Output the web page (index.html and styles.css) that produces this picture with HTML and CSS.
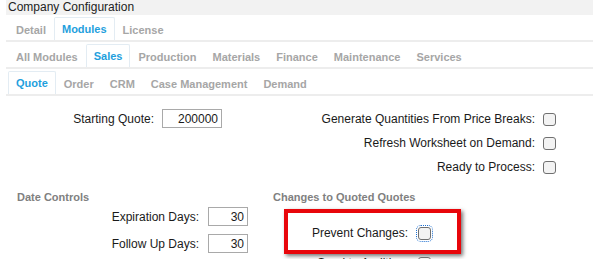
FILE: index.html
```html
<!DOCTYPE html>
<html lang="en">
<head>
    <meta charset="UTF-8">
    <title>Company Configuration</title>
    <link rel="stylesheet" href="styles.css">
</head>
<body>
    <div class="config">
        <div class="title">Company Configuration</div>

        <ul class="tabs">
            <li>Detail</li>
            <li class="active">Modules</li>
            <li>License</li>
        </ul>
        <ul class="tabs">
            <li>All Modules</li>
            <li class="active">Sales</li>
            <li>Production</li>
            <li>Materials</li>
            <li>Finance</li>
            <li>Maintenance</li>
            <li>Services</li>
        </ul>
        <ul class="tabs">
            <li class="active">Quote</li>
            <li>Order</li>
            <li>CRM</li>
            <li>Case Management</li>
            <li>Demand</li>
        </ul>

        <div class="section first">
            <div class="col left">
                <div class="field quote-field">
                    <label>Starting Quote:</label>
                    <input type="text" class="num wide" value="200000">
                </div>
            </div>
            <div class="col right checks">
                <div class="check-row">
                    <label>Generate Quantities From Price Breaks:</label>
                    <input type="checkbox">
                </div>
                <div class="check-row">
                    <label>Refresh Worksheet on Demand:</label>
                    <input type="checkbox">
                </div>
                <div class="check-row">
                    <label>Ready to Process:</label>
                    <input type="checkbox">
                </div>
            </div>
        </div>

        <div class="section">
            <div class="col left">
                <h3 class="date-head">Date Controls</h3>
                <div class="field date-field">
                    <label>Expiration Days:</label>
                    <input type="text" class="num short" value="30">
                </div>
                <div class="field date-field">
                    <label>Follow Up Days:</label>
                    <input type="text" class="num short" value="30">
                </div>
            </div>
            <div class="col right">
                <h3 class="changes-head">Changes to Quoted Quotes</h3>
                <div class="highlight">
                    <div class="field change-field">
                        <label>Prevent Changes:</label>
                        <input type="checkbox" class="focused">
                    </div>
                </div>
                <div class="field change-field after">
                    <label>Send to Auditing:</label>
                    <input type="checkbox">
                </div>
            </div>
        </div>
    </div>
</body>
</html>
```

FILE: styles.css
```css
body {
    margin: 0;
    background-color: #fff;
    font-family: 'Liberation Sans', Arial, sans-serif;
    font-size: 12px;
    color: #1a1a1a;
    overflow: hidden;
}
.config {
    margin-left: 6px;
}
.title {
    height: 15px;
    line-height: 14px;
    padding-left: 2px;
    background-color: #f2f2f2;
    color: #222;
}

/* tab strips */
.tabs {
    display: flex;
    list-style: none;
    margin: 0;
    padding: 2px 0 0 2px;
    border-bottom: 2px solid #ededed;
}
.tabs li {
    height: 22px;
    line-height: 25px;
    padding: 0 7px;
    font-size: 11px;
    font-weight: bold;
    color: #a6a6a6;
    border: 1px solid transparent;
    border-bottom: none;
}
.tabs li.active {
    color: #1f9fdd;
    line-height: 22px;
    border-color: #e3ecf3;
    border-radius: 2px 2px 0 0;
}

/* form sections */
.section {
    display: flex;
}
.col.left {
    width: 264px;
}
.col.right {
    flex: 1;
}
.section.first {
    height: 94px;
}
.field {
    display: flex;
    align-items: center;
}
.field label {
    text-align: right;
}
input[type="text"] {
    box-sizing: border-box;
    height: 19px;
    border: 1px solid #a9a9a9;
    padding: 0 3px;
    font-family: inherit;
    font-size: 12px;
    color: #1a1a1a;
    text-align: right;
    margin: 0;
}
input[type="checkbox"] {
    appearance: none;
    -webkit-appearance: none;
    box-sizing: border-box;
    width: 13px;
    height: 13px;
    margin: 0;
    border: 1px solid #707070;
    border-radius: 3px;
    background-color: #f3f3f3;
}
input.focused {
    outline: 1px dotted #1e6fd0;
    outline-offset: 1px;
}
.wide {
    width: 60px;
}
.short {
    width: 40px;
}
.quote-field {
    margin-top: 13px;
}
.quote-field label {
    width: 148px;
    margin-right: 8px;
}

.checks {
    display: flex;
    flex-direction: column;
    align-items: flex-end;
    padding: 11px 37px 0 0;
}
.check-row {
    display: flex;
    align-items: center;
    height: 24px;
}
.check-row label {
    margin-right: 8px;
}

h3 {
    margin: 0;
    height: 14px;
    line-height: 14px;
    font-size: 11px;
    font-weight: bold;
    color: #808080;
}
.date-head {
    padding-left: 11px;
}
.changes-head {
    padding-left: 3px;
}
.date-field {
    margin-top: 3px;
    margin-bottom: 8px;
}
.date-field label {
    width: 193px;
    margin-right: 9px;
}

.highlight {
    box-sizing: border-box;
    width: 177px;
    height: 45px;
    margin: 5px 0 0 14px;
    padding-top: 13px;
    border: 4px solid #e8060b;
    box-shadow: 2px 2px 4px rgba(0, 0, 0, 0.55);
}
.change-field label {
    width: 120px;
    margin-right: 10px;
}
.change-field.after {
    margin: 2px 0 0 18px;
}
```
